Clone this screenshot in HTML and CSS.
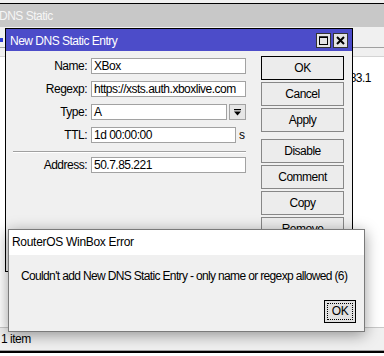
FILE: index.html
```html
<!DOCTYPE html>
<html lang="en">
<head>
    <meta charset="UTF-8">
    <meta name="viewport" content="width=device-width, initial-scale=1.0">
    <title>DNS Static</title>
    <link rel="stylesheet" href="styles.css">
</head>
<body>
    <div class="desktop">
        <div class="top-strip"></div>
        <div class="win-title">DNS Static</div>
        <div class="toolbar"><span class="tb-add"></span></div>
        <div class="list-head"></div>
        <div class="list">
            <div class="list-row"><span class="cell-addr">192.168.83.1</span></div>
        </div>
        <div class="status">1 item</div>
        <div class="bottom-edge"></div>
    </div>

    <div class="dialog">
        <div class="dlg-title">
            <span class="dlg-caption">New DNS Static Entry</span>
            <span class="title-btns">
                <span class="tbtn">
                    <svg width="9" height="9" viewBox="0 0 9 9"><rect x="0.5" y="1" width="8" height="7.5" fill="none" stroke="#000" stroke-width="1"/><rect x="0" y="0.5" width="9" height="1.5" fill="#000"/></svg>
                </span>
                <span class="tbtn">
                    <svg width="9" height="9" viewBox="0 0 9 9"><path d="M1 1 L8 8 M8 1 L1 8" stroke="#000" stroke-width="2"/></svg>
                </span>
            </span>
        </div>
        <div class="dlg-body">
            <div class="form">
                <div class="row">
                    <span class="label">Name:</span>
                    <span class="field">XBox</span>
                </div>
                <div class="row">
                    <span class="label">Regexp:</span>
                    <span class="field">https://xsts.auth.xboxlive.com</span>
                </div>
                <div class="row">
                    <span class="label">Type:</span>
                    <span class="field field-type">A</span>
                    <span class="drop-btn">
                        <svg width="9" height="9" viewBox="0 0 9 9"><rect x="1" y="1" width="7" height="1.2" fill="#000"/><path d="M1 3.5 H8 L4.5 7.5 Z" fill="#000"/></svg>
                    </span>
                </div>
                <div class="row">
                    <span class="label">TTL:</span>
                    <span class="field field-ttl">1d 00:00:00</span>
                    <span class="unit">s</span>
                </div>
                <div class="sep"></div>
                <div class="row">
                    <span class="label">Address:</span>
                    <span class="field">50.7.85.221</span>
                </div>
            </div>
            <div class="buttons">
                <div class="btn btn-default">OK</div>
                <div class="btn">Cancel</div>
                <div class="btn btn-group-end">Apply</div>
                <div class="btn">Disable</div>
                <div class="btn">Comment</div>
                <div class="btn">Copy</div>
                <div class="btn">Remove</div>
            </div>
        </div>
    </div>

    <div class="msgbox">
        <div class="msg-title">RouterOS WinBox Error</div>
        <div class="msg-body">
            <div class="msg-text">Couldn't add New DNS Static Entry - only name or regexp allowed (6)</div>
            <div class="msg-footer">
                <div class="msg-ok"><span class="focus">OK</span></div>
            </div>
        </div>
    </div>
</body>
</html>
```

FILE: styles.css
```css
body {
    margin: 0;
    width: 384px;
    height: 356px;
    overflow: hidden;
    position: relative;
    font-family: "Liberation Sans", Arial, sans-serif;
    font-size: 12px;
    letter-spacing: -0.5px;
    color: #000;
    background-color: #fff;
}

/* parent window */
.desktop {
    display: flex;
    flex-direction: column;
    height: 356px;
}

.top-strip {
    height: 3px;
    background-color: #f0f0f0;
    border-bottom: 1px solid #000;
}

.win-title {
    height: 23px;
    line-height: 23px;
    padding-top: 1px;
    box-sizing: border-box;
    margin-left: -1px;
    background-color: #c8c8c8;
    color: #f6f6f6;
}

.toolbar {
    height: 20px;
    background-color: #f0f0f0;
    border-bottom: 1px solid #a0a0a0;
}

.tb-add {
    display: block;
    width: 3px;
    height: 4px;
    margin-top: 11px;
    background-color: #2a3ad0;
}

.list-head {
    height: 8px;
    background-color: #f0f0f0;
    border-bottom: 1px solid #d4d4d4;
}

.list {
    flex: 1;
    background-color: #fff;
}

.list-row {
    margin-top: 13px;
    height: 17px;
    line-height: 17px;
}

.cell-addr {
    display: block;
    width: 371px;
    text-align: right;
}

.status {
    height: 22px;
    line-height: 22px;
    padding-left: 1px;
    background-color: #f0f0f0;
    border-top: 1px solid #c8c8c8;
    border-bottom: 1px solid #a0a0a0;
}

.bottom-edge {
    height: 2px;
    margin-bottom: 3px;
    background-color: #000;
}

/* New DNS Static Entry */
.dialog {
    position: absolute;
    left: 5px;
    top: 28px;
    width: 346px;
    height: 242px;
    border: 1px solid #000;
    background-color: #f0f0f0;
}

.dlg-title {
    display: flex;
    align-items: center;
    justify-content: space-between;
    height: 22px;
    padding: 0 4px;
    background-color: #4c4cc9;
    color: #fff;
}

.dlg-caption {
    padding-top: 2px;
}

.title-btns {
    display: flex;
    gap: 2px;
}

.tbtn {
    display: flex;
    align-items: center;
    justify-content: center;
    width: 15px;
    height: 15px;
    box-sizing: border-box;
    border: 1px solid #333;
    background-color: #e4e4e4;
}

.dlg-body {
    display: flex;
    gap: 15px;
    padding-top: 5px;
}

.form {
    width: 240px;
    padding-top: 2px;
}

.row {
    display: flex;
    align-items: center;
    height: 16px;
    margin-bottom: 7px;
}

.label {
    width: 81px;
    margin-right: 4px;
    text-align: right;
}

.field {
    width: 155px;
    height: 16px;
    box-sizing: border-box;
    padding-left: 2px;
    border: 1px solid #a2a2a2;
    background-color: #fff;
    line-height: 14px;
    white-space: nowrap;
    overflow: hidden;
}

.field-type {
    width: 136px;
}

.drop-btn {
    display: flex;
    align-items: center;
    justify-content: center;
    width: 17px;
    height: 16px;
    margin-left: 2px;
    box-sizing: border-box;
    border: 1px solid #a2a2a2;
    background-color: #e6e6e6;
}

.field-ttl {
    width: 145px;
}

.unit {
    margin-left: 3px;
}

.sep {
    width: 233px;
    height: 1px;
    margin: 8px 0 4px 7px;
    background-color: #a0a0a0;
    border-bottom: 1px solid #fff;
}

.buttons {
    display: flex;
    flex-direction: column;
    gap: 2px;
    width: 83px;
}

.btn {
    height: 24px;
    line-height: 22px;
    box-sizing: border-box;
    border: 1px solid #878787;
    background-color: #ececec;
    text-align: center;
}

.btn-default {
    border-color: #000;
}

.btn-group-end {
    margin-bottom: 5px;
}

/* error message box */
.msgbox {
    position: absolute;
    left: 8px;
    top: 229px;
    width: 355px;
    height: 101px;
    border: 1px solid #7a7a7a;
    background-color: #f0f0f0;
    box-shadow: 0 3px 14px rgba(0, 0, 0, 0.4);
    display: flex;
    flex-direction: column;
}

.msg-title {
    height: 25px;
    line-height: 25px;
    padding-left: 3px;
    letter-spacing: -0.3px;
    background-color: #fff;
}

.msg-body {
    flex: 1;
    padding: 13px 8px 0 12px;
}

.msg-text {
    line-height: 16px;
    letter-spacing: -0.65px;
    white-space: nowrap;
}

.msg-footer {
    display: flex;
    justify-content: flex-end;
    margin-top: 16px;
}

.msg-ok {
    width: 32px;
    height: 23px;
    box-sizing: border-box;
    padding: 2px;
    border: 1px solid #000;
    background-color: #e1e1e1;
}

.focus {
    display: block;
    height: 100%;
    box-sizing: border-box;
    border: 1px dotted #000;
    line-height: 15px;
    text-align: center;
}
```
